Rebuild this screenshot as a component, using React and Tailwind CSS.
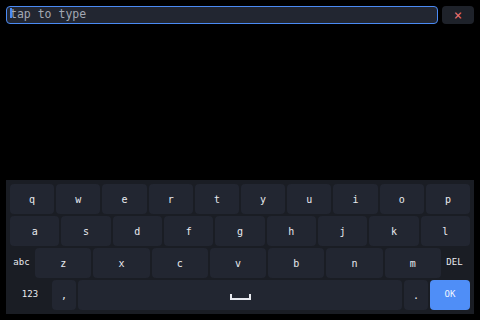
import React from "react";

const ROW1 = ["q", "w", "e", "r", "t", "y", "u", "i", "o", "p"];
const ROW2 = ["a", "s", "d", "f", "g", "h", "j", "k", "l"];
const ROW3 = ["z", "x", "c", "v", "b", "n", "m"];

const mono = { fontFamily: '"DejaVu Sans Mono", "Liberation Mono", monospace' };

function Key({ label, className = "" }) {
  return (
    <div
      className={`h-[30px] flex items-center justify-center rounded-[4px] bg-[#222631] text-[10px] text-[#e8eaef] ${className}`}
    >
      {label}
    </div>
  );
}

export default function App() {
  return (
    <div className="w-[480px] h-[320px] bg-black flex flex-col" style={mono}>
      <div className="flex gap-[4px] px-[6px] pt-[6px]">
        <div className="flex-1 h-[18px] rounded-[4px] border border-[#4a8af4] bg-[#222631] flex items-center pl-[3px]">
          <span className="relative text-[11.5px] leading-none text-[#a3a8b3]">
            <span className="absolute left-0 top-[-1px] w-[2px] h-[10px] bg-[#4a8af4]" />
            tap to type
          </span>
        </div>
        <button className="w-[32px] h-[18px] rounded-[4px] bg-[#1e222a] flex items-center justify-center text-[14px] leading-none text-[#f0706e]">
          ×
        </button>
      </div>

      <div className="flex-1" />

      <div className="mx-[6px] mb-[6px] p-[4px] bg-[#1a1d24] flex flex-col gap-[2px]">
        <div className="flex gap-[2px]">
          {ROW1.map((k) => (
            <Key key={k} label={k} className="flex-1" />
          ))}
        </div>
        <div className="flex gap-[2px]">
          {ROW2.map((k) => (
            <Key key={k} label={k} className="flex-1" />
          ))}
        </div>
        <div className="flex gap-[2px]">
          <div className="w-[23px] h-[30px] flex items-center justify-center text-[9px] text-[#e8eaef]">
            abc
          </div>
          {ROW3.map((k) => (
            <Key key={k} label={k} className="flex-1" />
          ))}
          <div className="w-[27px] h-[30px] flex items-center justify-center pr-[4px] text-[9px] text-[#e8eaef]">
            DEL
          </div>
        </div>
        <div className="flex gap-[2px]">
          <div className="w-[40px] h-[30px] flex items-center justify-center text-[9px] text-[#e8eaef]">
            123
          </div>
          <Key label="," className="w-[24px]" />
          <Key
            label={
              <span className="block w-[21px] h-[6px] mt-[4px] border-l-2 border-r-2 border-b-2 border-[#e8eaef]" />
            }
            className="flex-1"
          />
          <Key label="." className="w-[24px]" />
          <div className="w-[40px] h-[30px] rounded-[4px] bg-[#4f8ef7] flex items-center justify-center text-[9px] text-[#eef4ff]">
            OK
          </div>
        </div>
      </div>
    </div>
  );
}
